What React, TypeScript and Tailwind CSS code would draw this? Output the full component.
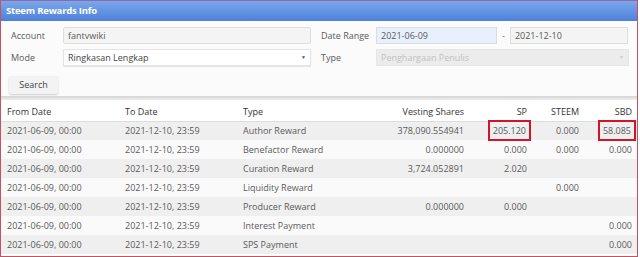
import React from "react";

type Row = {
  type: string;
  vests: string;
  sp: string;
  steem: string;
  sbd: string;
};

const rows: Row[] = [
  { type: "Author Reward", vests: "378,090.554941", sp: "205.120", steem: "0.000", sbd: "58.085" },
  { type: "Benefactor Reward", vests: "0.000000", sp: "0.000", steem: "0.000", sbd: "0.000" },
  { type: "Curation Reward", vests: "3,724.052891", sp: "2.020", steem: "", sbd: "" },
  { type: "Liquidity Reward", vests: "", sp: "", steem: "0.000", sbd: "" },
  { type: "Producer Reward", vests: "0.000000", sp: "0.000", steem: "", sbd: "" },
  { type: "Interest Payment", vests: "", sp: "", steem: "", sbd: "0.000" },
  { type: "SPS Payment", vests: "", sp: "", steem: "", sbd: "0.000" },
];

function Marked({ children }: { children: React.ReactNode }) {
  return (
    <span className="inline-block -mx-[4px] -my-[2px] h-[21px] border-2 border-[#d3122b] px-[3px] leading-[17px]">
      {children}
    </span>
  );
}

export default function App(): JSX.Element {
  return (
    <div
      className="w-[640px] h-[257px] overflow-hidden bg-white text-[9px] text-[#5a5a5a]"
      style={{ fontFamily: '"Open Sans", "Liberation Sans", sans-serif' }}
    >
      <div className="w-[638px] h-[257px] border-x border-b border-[#c9505e] flex flex-col">
        <div className="h-[21px] shrink-0 bg-gradient-to-b from-[#7ba6ea] to-[#4c81da] border-t border-[#8e6aa8] flex items-center px-[5px]">
          <span className="font-bold text-white text-[9.5px] tracking-[-0.2px]">Steem Rewards Info</span>
        </div>

        <div className="bg-[#fbfbfb] px-[8px] pt-[6px] pb-[2px] shrink-0">
          <div className="grid grid-cols-[54px_248px_65px_1fr] gap-y-[5px] items-center">
            <span className="pl-[2px]">Account</span>
            <div className="h-[17px] bg-[#f4f4f4] border border-[#dedede] rounded-[2px] flex items-center px-[4px]">
              fantvwiki
            </div>
            <span className="pl-[10px] whitespace-nowrap">Date Range</span>
            <div className="flex items-center gap-[5px] pr-[1px]">
              <div className="h-[17px] w-[121px] bg-[#e8f0fe] border border-[#dcdcdc] flex items-center px-[4px]">
                2021-06-09
              </div>
              <span className="text-[#777]">-</span>
              <div className="h-[17px] flex-1 bg-[#f4f4f4] border border-[#dedede] flex items-center px-[4px]">
                2021-12-10
              </div>
            </div>

            <span className="pl-[2px]">Mode</span>
            <div className="h-[17px] bg-white border border-[#e4e4e4] shadow-[0_1px_1px_rgba(0,0,0,0.08)] flex items-center justify-between px-[4px] text-[#444]">
              <span>Ringkasan Lengkap</span>
              <span className="text-[5px] text-[#555]">▼</span>
            </div>
            <span className="pl-[10px]">Type</span>
            <div className="h-[17px] bg-[#ececec] border border-[#e6e6e6] flex items-center justify-between px-[4px] text-[#c2c2c2]">
              <span>Penghargaan Penulis</span>
              <span className="text-[5px] text-[#c9c9c9]">▼</span>
            </div>
          </div>

          <button className="mt-[10px] h-[18px] w-[49px] bg-[#f3f3f3] rounded-[2px] shadow-[0_1px_2px_rgba(0,0,0,0.18)] text-[#444] text-[9px] block">
            Search
          </button>
        </div>

        <div className="h-[4px] shrink-0 bg-gradient-to-b from-[#d4d4d4] to-[#ededed]" />

        <table className="w-full border-collapse table-fixed mt-[3px]">
          <colgroup>
            <col className="w-[118px]" />
            <col className="w-[118px]" />
            <col className="w-[114px]" />
            <col className="w-[120px]" />
            <col className="w-[63px]" />
            <col className="w-[52px]" />
            <col />
          </colgroup>
          <thead>
            <tr className="h-[18px] border-b border-[#dddddd] text-[#333]">
              <th className="text-left font-normal pl-[6px]">From Date</th>
              <th className="text-left font-normal pl-[6px]">To Date</th>
              <th className="text-left font-normal pl-[6px]">Type</th>
              <th className="text-right font-normal pr-[7px]">Vesting Shares</th>
              <th className="text-right font-normal pr-[7px]">SP</th>
              <th className="text-right font-normal pr-[7px]">STEEM</th>
              <th className="text-right font-normal pr-[5px]">SBD</th>
            </tr>
          </thead>
          <tbody>
            {rows.map((r, i) => (
              <tr key={r.type} className={`h-[19px] ${i % 2 === 0 ? "bg-[#efefef]" : "bg-[#fafafa]"}`}>
                <td className="pl-[6px]">2021-06-09, 00:00</td>
                <td className="pl-[6px]">2021-12-10, 23:59</td>
                <td className="pl-[6px] whitespace-nowrap">{r.type}</td>
                <td className="text-right pr-[7px]">{r.vests}</td>
                <td className="text-right pr-[7px]">{i === 0 ? <Marked>{r.sp}</Marked> : r.sp}</td>
                <td className="text-right pr-[7px]">{r.steem}</td>
                <td className="text-right pr-[5px]">{i === 0 ? <Marked>{r.sbd}</Marked> : r.sbd}</td>
              </tr>
            ))}
          </tbody>
        </table>
      </div>
    </div>
  );
}
